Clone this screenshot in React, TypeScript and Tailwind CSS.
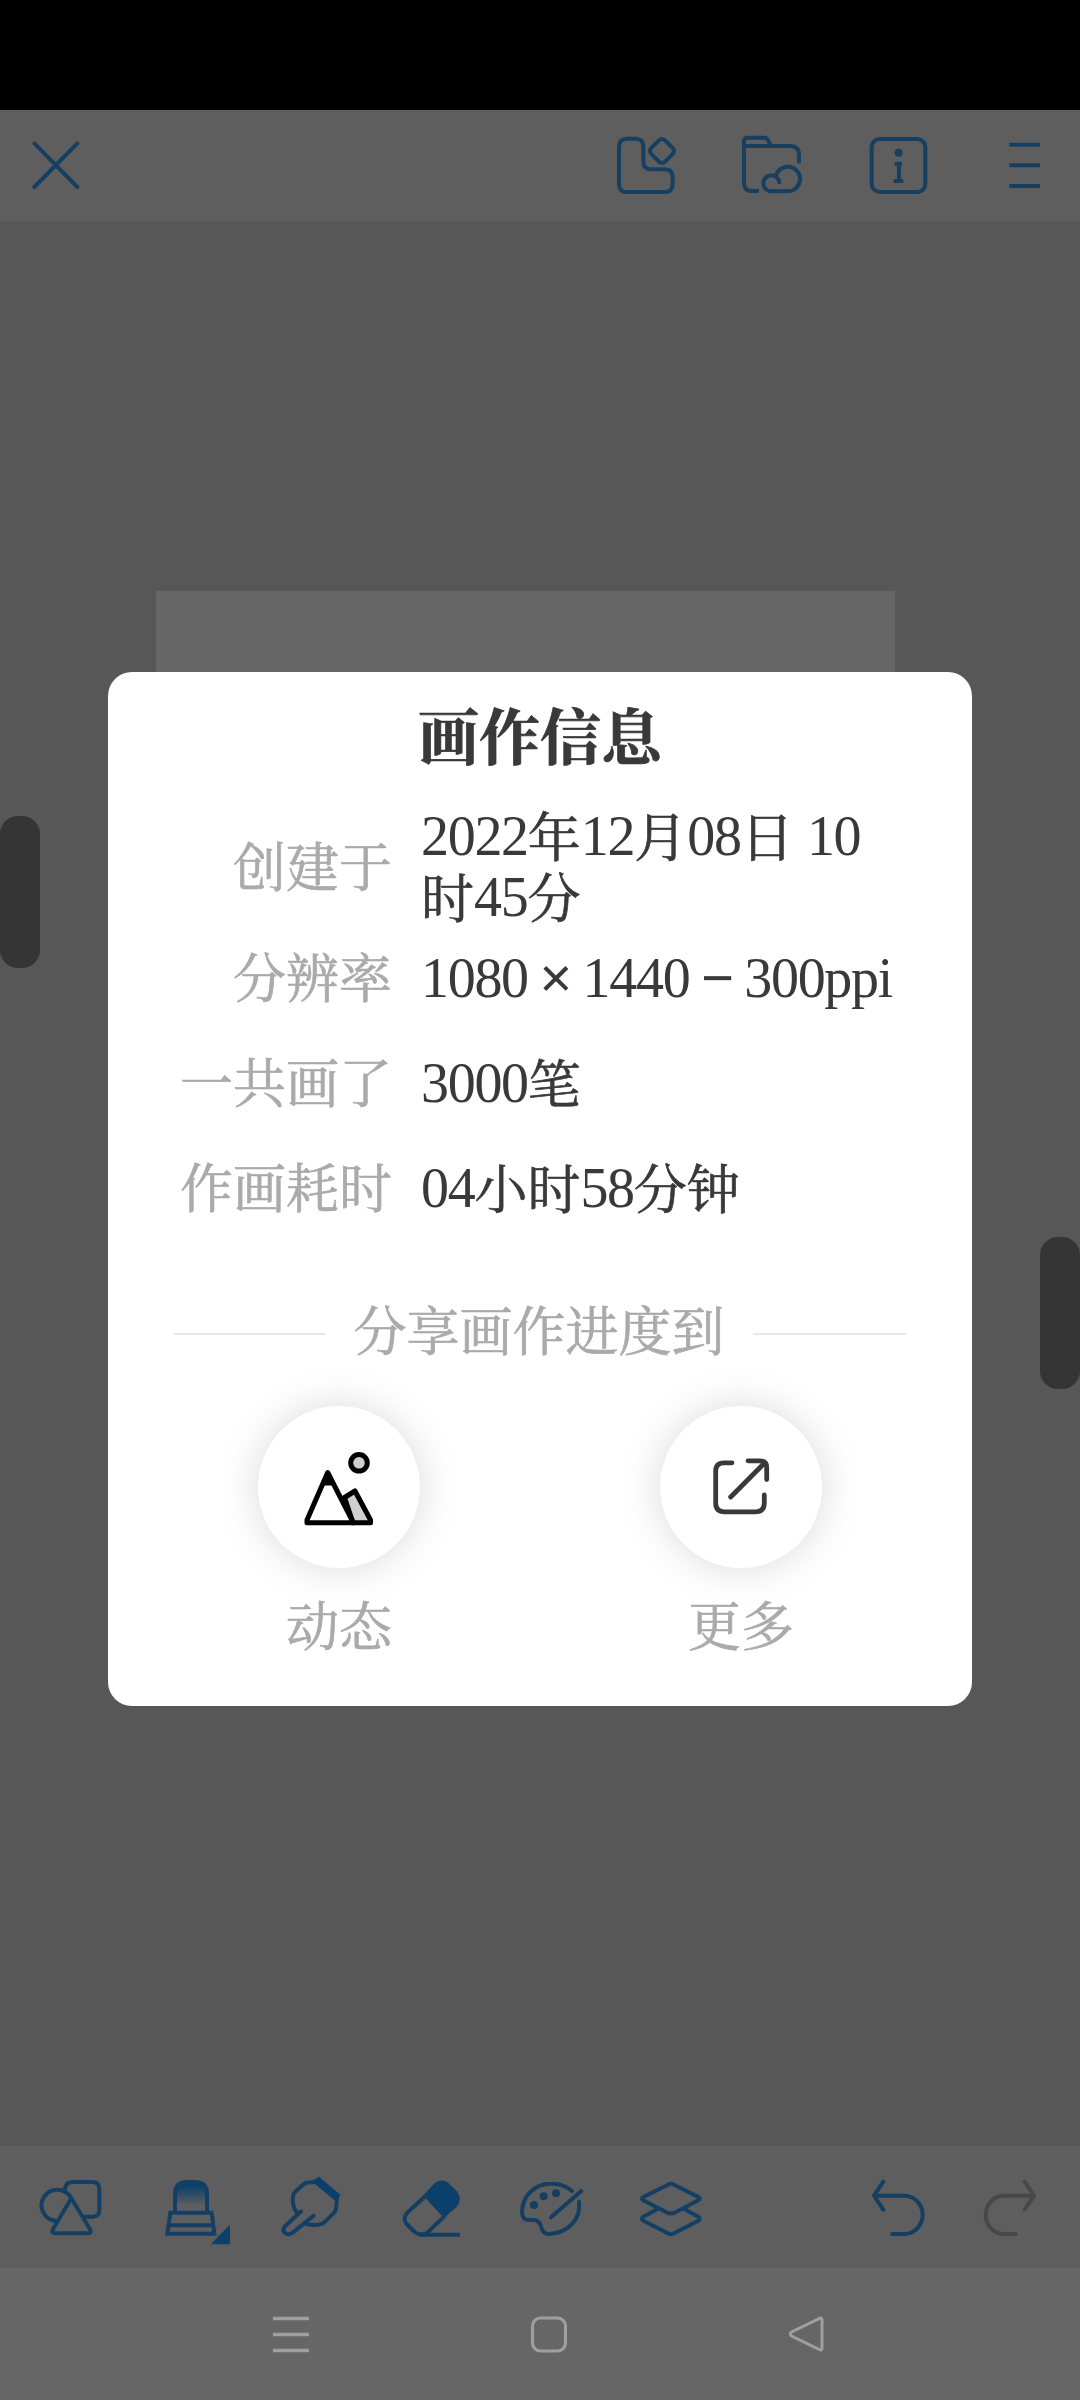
import type { ReactNode } from "react";

const serif =
  "font-['Liberation_Serif','Noto_Serif_CJK_SC','Noto_Sans_CJK_SC',serif]";

function Icon({
  box,
  className,
  children,
}: {
  box: string;
  className: string;
  children: ReactNode;
}) {
  return (
    <svg
      viewBox={box}
      className={`shrink-0 ${className}`}
      fill="none"
      stroke="currentColor"
      strokeWidth={12}
      strokeLinecap="round"
      strokeLinejoin="round"
    >
      {children}
    </svg>
  );
}

function TopBar() {
  return (
    <header className="flex h-[111px] items-center bg-[#5e5e5e] pl-[30px] pr-[38px] text-[#173f5f]">
      <Icon box="0 2 156 156" className="mr-auto size-[52px]">
        <path strokeWidth={12} d="M13 12L142 143M142 12L13 143" />
      </Icon>
      <Icon box="102 99 195 195" className="size-[65px]">
        <path d="M141 116H168Q190 116 190 140V184Q190 208 214 208H254Q278 208 278 232V252Q278 276 254 276H141Q117 276 117 252V140Q117 116 141 116Z" />
        <rect x="217" y="124" width="58" height="58" rx="13" transform="rotate(45 246 153)" />
      </Icon>
      <Icon box="480 99 195 195" className="ml-[61px] size-[65px]">
        <path strokeLinecap="butt" d="M492 138V124Q492 113 503 113H553Q560 113 564 120L574 138M492 138H630Q657 138 657 165V190M492 138V248Q492 273 517 273H537" />
        <path strokeLinecap="butt" d="M598 252A24 24 0 1 0 575 274H624A37 37 0 1 0 587 229" />
      </Icon>
      <Icon box="858 99 195 195" className="ml-[61px] size-[65px]">
        <rect x="875" y="117" width="161" height="159" rx="24" />
        <circle cx="956" cy="158" r="12" fill="currentColor" stroke="none" />
        <path strokeLinecap="butt" d="M944 191H966M957 188V243M941 243H970" />
      </Icon>
      <Icon box="1281 99 105 195" className="ml-[76px] h-[65px] w-[35px]">
        <path strokeLinecap="butt" d="M1288 134H1380M1288 196H1380M1288 258H1380" />
      </Icon>
    </header>
  );
}

function ToolBar() {
  return (
    <div className="flex h-[122px] items-center bg-[#5e5e5e] pl-[35px] text-[#143f63]">
      <Icon box="105 106 216 246" className="h-[82px] w-[72px]">
        <path d="M212 200A47 47 0 1 0 168 271" />
        <path d="M195 178Q195 154 217 154H275Q298 154 298 176V238Q298 258 278 258H252" />
        <path d="M214 203L158 297Q154 308 166 308H262Q276 308 271 297Z" />
      </Icon>
      <Icon box="489 106 216 246" className="ml-[56px] h-[82px] w-[72px]">
        <defs>
          <linearGradient id="stamp" x1="0" y1="0" x2="0" y2="1">
            <stop offset="0.15" stopColor="#0b406c" />
            <stop offset="0.8" stopColor="#5e5e5e" />
          </linearGradient>
        </defs>
        <path fill="url(#stamp)" d="M525 242V190Q525 154 560 154H585Q621 154 621 190V242" />
        <path strokeLinejoin="miter" d="M511 246H635L643 309H502Z" />
        <path strokeLinecap="butt" d="M506 284H640" />
        <path fill="#0d416b" stroke="none" d="M632 341L690 282V341Z" />
      </Icon>
      <Icon box="837 106 195 246" className="ml-[44px] h-[82px] w-[65px]">
        <path d="M903 242L856 286Q846 297 854 306Q864 315 878 306L941 255" />
        <path d="M890 245Q874 225 880 192Q885 181 918 156L945 154M1010 207Q1010 235 1004 244Q985 265 968 279Q948 286 922 281" />
        <path fill="#0b406c" stroke="none" d="M938 149L957 138L1021 192L1012 213L1000 206L945 160Z" />
      </Icon>
      <Icon box="57 106 195 246" className="ml-[55px] h-[82px] w-[65px]">
        <path d="M134 198L84 244Q66 262 80 280L104 304Q124 319 144 304L192 258" />
        <path fill="#0b406c" strokeWidth={4} d="M132 195L162 162Q182 143 203 158L230 184Q245 205 230 226L192 260Z" />
        <path strokeLinecap="butt" d="M118 312H240" />
      </Icon>
      <Icon box="408 106 210 246" className="ml-[52px] h-[82px] w-[70px]">
        <path d="M576 181Q550 158 514 159C460 159 426 200 426 245Q428 268 446 268H462Q480 270 484 290Q488 310 508 310C570 305 603 262 597 213" />
        <path d="M513 260L604 181" />
        <g fill="currentColor" stroke="none">
          <circle cx="462" cy="223" r="12" />
          <circle cx="491" cy="197" r="12" />
          <circle cx="528" cy="188" r="12" />
        </g>
      </Icon>
      <Icon box="771 106 204 246" className="ml-[51px] h-[82px] w-[68px]">
        <path d="M864 162Q873 157 882 162L955 199Q963 204 955 209L884 246Q873 251 862 246L790 209Q782 204 790 199Z" />
        <path d="M832 236L790 258Q782 264 790 270L864 308Q873 313 882 308L955 270Q963 264 955 258L914 236" />
      </Icon>
      <Icon box="150 106 171 246" className="ml-[165px] h-[82px] w-[57px]">
        <path d="M190 153L162 195L190 237M164 195H253A55 57.5 0 0 1 253 310H217" />
      </Icon>
      <Icon box="483 106 171 246" className="ml-[54px] h-[82px] w-[57px] text-[#484848]">
        <path d="M614 153L642 195L614 237M640 195H552A55 57.5 0 0 0 552 310H587" />
      </Icon>
    </div>
  );
}

function NavBar() {
  return (
    <nav className="flex h-[132px] items-center gap-[221px] bg-[#666666] pl-[272px] text-[#9f9f9f]">
      <Icon box="0 0 37 37" className="size-[37px]">
        <path strokeWidth={3.5} strokeLinecap="butt" d="M1 2.5H37M1 18.5H37M1 34.5H37" />
      </Icon>
      <Icon box="0 0 37 37" className="size-[37px]">
        <rect strokeWidth={3.2} x="2.5" y="2" width="33" height="33" rx="8" />
      </Icon>
      <Icon box="0 0 37 37" className="size-[37px]">
        <path strokeWidth={3} d="M31 2.6Q34 1 34 4V32Q34 35 31 33.4L3.5 20Q1 18 3.5 16Z" />
      </Icon>
    </nav>
  );
}

/* Tall, tightly set numerals that sit beside the Chinese characters. */
function Num({ children }: { children: ReactNode }) {
  return (
    <span className="align-[2px] text-[56px] leading-none tracking-[-1.3px] [-webkit-text-stroke:0px]">
      {children}
    </span>
  );
}

function Sign({ children }: { children: ReactNode }) {
  return (
    <span className="mx-[-1px] font-['Liberation_Sans',sans-serif]">{children}</span>
  );
}

function Row({ label, children }: { label: string; children: ReactNode }) {
  return (
    <div className="flex h-[105px] items-center gap-[29px] text-[53px] leading-[59px] first:h-[118px]">
      <dt className="w-[284px] shrink-0 text-right text-[#aaaaaa]">{label}</dt>
      <dd className="whitespace-nowrap text-[#393939]">{children}</dd>
    </div>
  );
}

function ShareTarget({ label, children }: { label: string; children: ReactNode }) {
  return (
    <div className="flex w-[162px] flex-col items-center">
      <button className="flex size-[162px] items-center justify-center rounded-full bg-white shadow-[0_0_40px_rgba(0,0,0,0.15)]">
        {children}
      </button>
      <span className="mt-[31px] text-[53px] leading-[59px] text-[#aaaaaa]">{label}</span>
    </div>
  );
}

function InfoDialog() {
  return (
    <section className={`absolute left-[108px] top-[672px] flex h-[1034px] w-[864px] flex-col rounded-[24px] bg-white [-webkit-text-stroke:0.7px] ${serif}`}>
      <h1 className="mt-[32px] text-center text-[61px] font-bold leading-[72px] text-[#393939]">画作信息</h1>
      <dl className="mt-[34px]">
        <Row label="创建于">
          <Num>2022</Num>年<Num>12</Num>月<Num>08</Num>日 <Num>10</Num>
          <br />时<Num>45</Num>分
        </Row>
        <Row label="分辨率">
          <Num>
            1080 <Sign>×</Sign> 1440 <Sign>−</Sign> 300ppi
          </Num>
        </Row>
        <Row label="一共画了">
          <Num>3000</Num>笔
        </Row>
        <Row label="作画耗时">
          <Num>04</Num>小时<Num>58</Num>分钟
        </Row>
      </dl>
      <div className="mx-[66px] mt-[61px] flex items-center justify-between text-[53px] leading-[59px] text-[#aaaaaa]">
        <span className="h-[2px] w-[151px] bg-[#e9e9e9]" />
        <span>分享画作进度到</span>
        <span className="h-[2px] w-[153px] bg-[#e9e9e9]" />
      </div>
      <div className="mt-[43px] flex justify-between px-[150px]">
        <ShareTarget label="动态">
          <Icon box="0 0 162 162" className="size-[162px]">
            <path fill="#d0d0d0" stroke="#000" strokeWidth={5} d="M86.500 91.500L97 85L112.500 114V116.800H95Z" />
            <path fill="#fff" stroke="#000" strokeWidth={5} d="M49 114L69.700 66.500L95.400 116.800H49Z" />
            <path fill="#000" stroke="none" d="M69.700 65L76 79.500H63.500Z" />
            <circle cx="101" cy="56.800" r="8.300" fill="#d0d0d0" stroke="#000" strokeWidth={5} />
          </Icon>
        </ShareTarget>
        <ShareTarget label="更多">
          <Icon box="0 0 162 162" className="size-[162px] text-[#393939]">
            <path strokeWidth={4.8} d="M72 56.800H64Q55.700 56.800 55.700 65V97Q55.700 105.800 64.500 105.800H95.500Q104.300 105.800 104.300 97V89M88 54.800H100Q106.700 54.800 106.700 61.500V73.500M104 57.500L70.700 91" />
          </Icon>
        </ShareTarget>
      </div>
    </section>
  );
}

export default function App() {
  return (
    <div className="relative flex h-[2400px] w-[1080px] flex-col overflow-hidden bg-[#575757]">
      <div className="h-[110px] bg-black" />
      <TopBar />
      <main className="relative flex-1">
        <div className="ml-[156px] mt-[370px] h-[986px] w-[739px] bg-[#666666]" />
        <div className="absolute left-0 top-[595px] h-[152px] w-[40px] rounded-[18px] bg-[#353535]" />
        <div className="absolute right-0 top-[1016px] h-[152px] w-[40px] rounded-[18px] bg-[#353535]" />
      </main>
      <ToolBar />
      <NavBar />
      <InfoDialog />
    </div>
  );
}
